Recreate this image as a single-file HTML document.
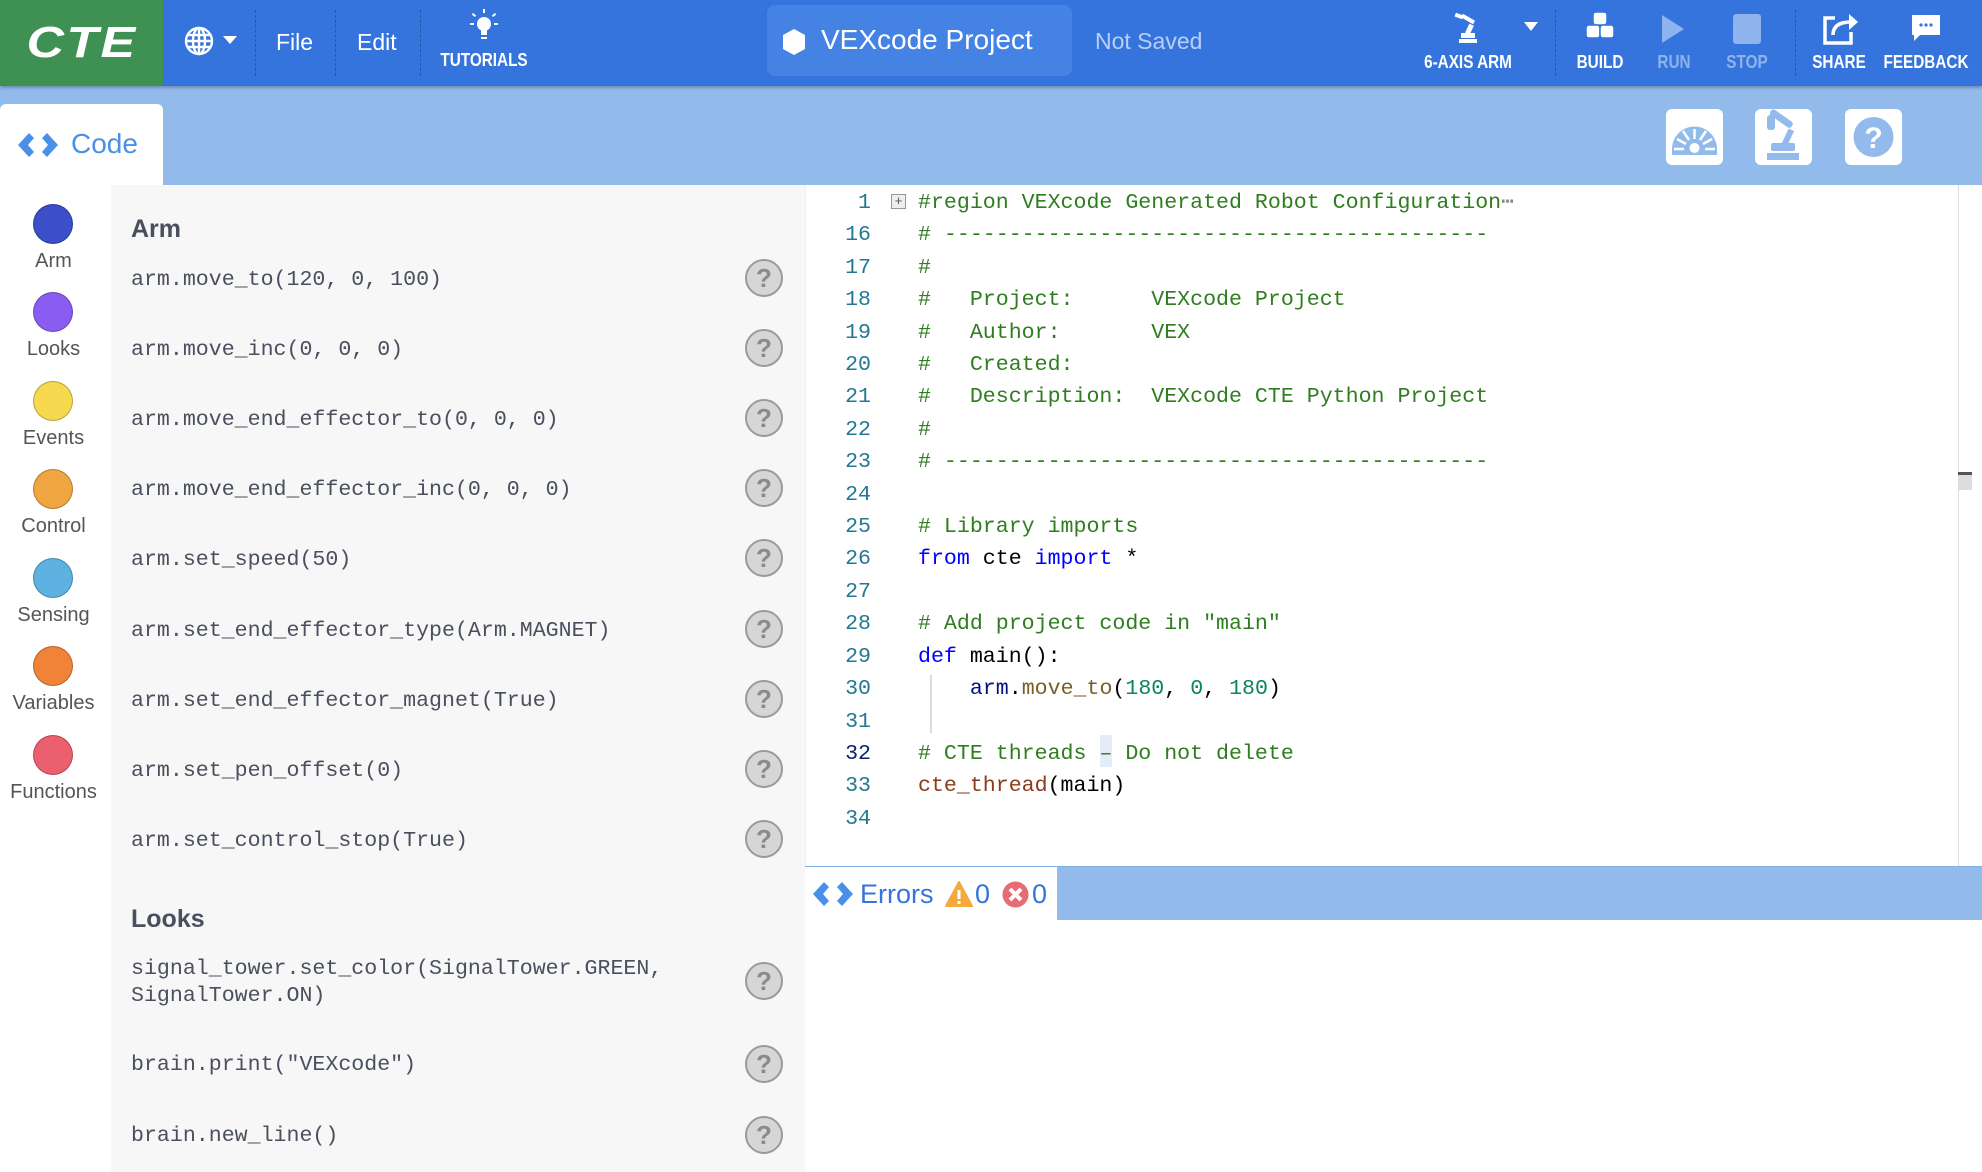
<!DOCTYPE html>
<html><head><meta charset="utf-8"><style>
*{margin:0;padding:0;box-sizing:border-box}
body{width:1982px;height:1172px;overflow:hidden;background:#fff;font-family:"Liberation Sans",sans-serif;position:relative}
.a{position:absolute}
#top{left:0;top:0;width:1982px;height:86px;background:#3574dc;box-shadow:0 2px 3px rgba(0,0,0,.25);z-index:2}
#logo{left:0;top:0;width:163px;height:86px;background:#3e9152;color:#fff;font:italic bold 44px "Liberation Sans",sans-serif;letter-spacing:2px;display:flex;align-items:center;justify-content:center}
#logo span{display:inline-block;transform:scaleX(1.18)}
.sep{top:10px;height:66px;border-left:1px dashed #2457a8}
.menu{color:#fff;font-size:23px;top:29px}
.lbl{color:#fff;font-weight:bold;font-size:18px;top:52px;transform:translateX(-50%) scaleX(.85);white-space:nowrap}
.dim{color:#8fb3ec}
#bar2{left:0;top:86px;width:1982px;height:99px;background:#92bbec}
#codetab{left:0;top:104px;width:163px;height:81px;background:#fff;border-radius:6px 6px 0 0;color:#4a90e8;font-size:28px}
.tb{top:109px;width:57px;height:56px;background:#fff;border-radius:6px}
#cats{left:0;top:185px;width:111px;height:987px;background:#fff}
.cat{left:-2px;width:111px;text-align:center;font-size:20px;color:#555}
.dot{position:absolute;left:35px;width:40px;height:40px;border-radius:50%;border:1px solid rgba(0,0,0,.25)}
#pal{left:111px;top:185px;width:694px;height:987px;background:#f7f7f7}
.h{left:131px;font-weight:bold;font-size:25px;color:#4a4f5e}
.it{left:131px;font:21.6px "Liberation Mono",monospace;color:#4a4f5e;white-space:pre;line-height:27px}
.q{left:745px;width:38px;height:38px;border-radius:50%;background:#d6d6d6;border:2px solid #9a9a9a;color:#8a8a8a;font:bold 26px "Liberation Sans",sans-serif;text-align:center;line-height:34px}
#ed{left:805px;top:185px;width:1177px;height:681px;background:#fff;border-left:1px solid #eee}
.ln{left:805px;width:66px;text-align:right;font:21.6px "Liberation Mono",monospace;color:#237893;line-height:32.4px}
.cd{left:918px;font:21.6px "Liberation Mono",monospace;white-space:pre;line-height:32.4px;color:#000}
.c{color:#2e7d1e}.k{color:#0000ff}.f{color:#795e26}.n{color:#098658}.v{color:#001080}.b{color:#8b3a1a}
</style></head><body>
<div id="top" class="a">
 <div id="logo" class="a"><span>CTE</span></div>
 <svg class="a" style="left:183px;top:25px" width="32" height="32" viewBox="0 0 32 32" fill="none" stroke="#fff" stroke-width="2.4"><circle cx="16" cy="16" r="13"/><ellipse cx="16" cy="16" rx="6" ry="13"/><line x1="16" y1="3" x2="16" y2="29"/><line x1="3" y1="16" x2="29" y2="16"/><line x1="5" y1="10" x2="27" y2="10"/><line x1="5" y1="22" x2="27" y2="22"/></svg>
 <div class="a" style="left:223px;top:36px;border-left:7px solid transparent;border-right:7px solid transparent;border-top:8px solid #fff"></div>
 <div class="sep a" style="left:255px"></div>
 <div class="menu a" style="left:276px">File</div>
 <div class="sep a" style="left:335px"></div>
 <div class="menu a" style="left:357px">Edit</div>
 <div class="sep a" style="left:420px"></div>
 <svg class="a" style="left:469px;top:8px" width="30" height="34" viewBox="0 0 30 34" fill="#fff"><circle cx="15" cy="16" r="7"/><rect x="12" y="22" width="6" height="5"/><rect x="12" y="29" width="6" height="2"/><rect x="14" y="1" width="2" height="4"/><rect x="3" y="6" width="4" height="2" transform="rotate(35 5 7)"/><rect x="23" y="6" width="4" height="2" transform="rotate(-35 25 7)"/><rect x="1" y="15" width="4" height="2"/><rect x="25" y="15" width="4" height="2"/></svg>
 <div class="lbl a" style="left:484px;top:50px">TUTORIALS</div>
 <div class="a" style="left:767px;top:5px;width:305px;height:71px;background:#4483e4;border-radius:8px"></div>
 <svg class="a" style="left:782px;top:28px" width="24" height="28" viewBox="0 0 24 28"><polygon points="12,1 23,7 23,21 12,27 1,21 1,7" fill="#fff"/></svg>
 <div class="a" style="left:821px;top:24px;color:#fff;font-size:28px">VEXcode Project</div>
 <div class="a" style="left:1095px;top:28px;color:#b9cff5;font-size:23px">Not Saved</div>
 <svg class="a" style="left:1453px;top:12px" width="30" height="32" viewBox="0 0 30 32" fill="#fff"><rect x="2" y="2" width="8" height="4" transform="rotate(20 6 4)"/><rect x="8" y="5" width="14" height="4" transform="rotate(30 15 7)"/><rect x="14" y="12" width="5" height="10" transform="rotate(25 16 17)"/><rect x="8" y="21" width="14" height="5"/><rect x="6" y="27" width="18" height="4"/></svg>
 <div class="lbl a" style="left:1468px">6-AXIS ARM</div>
 <div class="a" style="left:1524px;top:22px;border-left:7px solid transparent;border-right:7px solid transparent;border-top:9px solid #fff"></div>
 <div class="sep a" style="left:1555px"></div>
 <svg class="a" style="left:1584px;top:11px" width="32" height="34" viewBox="0 0 32 34" fill="#fff" stroke="#3574dc" stroke-width="1.5"><rect x="9" y="1" width="14" height="13" rx="3"/><rect x="2" y="14" width="14" height="13" rx="3"/><rect x="16" y="14" width="14" height="13" rx="3"/></svg>
 <div class="lbl a" style="left:1600px">BUILD</div>
 <svg class="a" style="left:1660px;top:14px" width="26" height="30" viewBox="0 0 26 30"><polygon points="2,1 24,15 2,29" fill="#8fb3ec"/></svg>
 <div class="lbl a dim" style="left:1674px">RUN</div>
 <div class="a" style="left:1733px;top:14px;width:28px;height:30px;background:#8fb3ec;border-radius:3px"></div>
 <div class="lbl a dim" style="left:1747px">STOP</div>
 <div class="sep a" style="left:1795px"></div>
 <svg class="a" style="left:1821px;top:10px" width="38" height="36" viewBox="0 0 38 36" fill="none" stroke="#fff" stroke-width="3.5"><path d="M14 8H4V33H30V22"/><path d="M12 25C12 15 20 12 30 12" /><polygon points="28,4 37,12 28,20" fill="#fff" stroke="none"/></svg>
 <div class="lbl a" style="left:1839px">SHARE</div>
 <svg class="a" style="left:1910px;top:13px" width="32" height="32" viewBox="0 0 32 32"><path d="M2 2H30V22H10L4 28V22H2Z" fill="#fff"/><circle cx="11" cy="12" r="1.6" fill="#3574dc"/><circle cx="16" cy="12" r="1.6" fill="#3574dc"/><circle cx="21" cy="12" r="1.6" fill="#3574dc"/></svg>
 <div class="lbl a" style="left:1926px">FEEDBACK</div>
</div>
<div id="bar2" class="a"></div>
<div id="codetab" class="a"><svg class="a" style="left:18px;top:27px" width="40" height="28" viewBox="0 0 40 28" fill="#4a90e8"><polygon points="0,14 11,2 16,7 10,14 16,21 11,26"/><polygon points="40,14 29,2 24,7 30,14 24,21 29,26"/></svg><span class="a" style="left:71px;top:24px">Code</span></div>
<div class="tb a" style="left:1666px"><svg width="57" height="56" viewBox="0 0 57 56"><path d="M6 40A22 22 0 0 1 51 40V46H6Z" fill="#92bbec"/><circle cx="28.5" cy="39" r="5" fill="#fff"/><g stroke="#fff" stroke-width="2.5"><line x1="28.5" y1="30" x2="28.5" y2="20"/><line x1="23" y1="31" x2="17" y2="22"/><line x1="34" y1="31" x2="40" y2="22"/><line x1="20" y1="35" x2="11" y2="30"/><line x1="37" y1="35" x2="46" y2="30"/><line x1="8" y1="40" x2="18" y2="40"/><line x1="39" y1="40" x2="49" y2="40"/></g></svg></div>
<div class="tb a" style="left:1755px"><svg width="57" height="56" viewBox="0 0 57 56" fill="#92bbec"><rect x="13" y="6" width="26" height="7" rx="3" transform="rotate(35 26 10)"/><rect x="12" y="6" width="8" height="15" rx="3"/><rect x="30" y="20" width="6" height="16" transform="rotate(25 33 28)"/><rect x="16" y="34" width="24" height="8" rx="2"/><rect x="12" y="44" width="32" height="7"/></svg></div>
<div class="tb a" style="left:1845px"><svg width="57" height="56" viewBox="0 0 57 56"><circle cx="28.5" cy="28" r="20" fill="#92bbec"/><text x="28.5" y="39" text-anchor="middle" font-family="Liberation Sans" font-weight="bold" font-size="30" fill="#fff">?</text></svg></div>

<div id="cats" class="a"></div>
<div class="cat a" style="top:204px"><div class="dot" style="top:0;background:#3a4fc8"></div><div style="padding-top:46px">Arm</div></div>
<div class="cat a" style="top:292px"><div class="dot" style="top:0;background:#8a5cf2"></div><div style="padding-top:46px">Looks</div></div>
<div class="cat a" style="top:381px"><div class="dot" style="top:0;background:#f6d94e"></div><div style="padding-top:46px">Events</div></div>
<div class="cat a" style="top:469px"><div class="dot" style="top:0;background:#f0a640"></div><div style="padding-top:46px">Control</div></div>
<div class="cat a" style="top:558px"><div class="dot" style="top:0;background:#5db2e2"></div><div style="padding-top:46px">Sensing</div></div>
<div class="cat a" style="top:646px"><div class="dot" style="top:0;background:#f08338"></div><div style="padding-top:46px">Variables</div></div>
<div class="cat a" style="top:735px"><div class="dot" style="top:0;background:#ec5f6f"></div><div style="padding-top:46px">Functions</div></div>

<div id="pal" class="a"></div>
<div class="h a" style="top:215px">Arm</div>
<div class="it a" style="top:267px">arm.move_to(120, 0, 100)</div><div class="q a" style="top:259px">?</div>
<div class="it a" style="top:337px">arm.move_inc(0, 0, 0)</div><div class="q a" style="top:329px">?</div>
<div class="it a" style="top:407px">arm.move_end_effector_to(0, 0, 0)</div><div class="q a" style="top:399px">?</div>
<div class="it a" style="top:477px">arm.move_end_effector_inc(0, 0, 0)</div><div class="q a" style="top:469px">?</div>
<div class="it a" style="top:547px">arm.set_speed(50)</div><div class="q a" style="top:539px">?</div>
<div class="it a" style="top:618px">arm.set_end_effector_type(Arm.MAGNET)</div><div class="q a" style="top:610px">?</div>
<div class="it a" style="top:688px">arm.set_end_effector_magnet(True)</div><div class="q a" style="top:680px">?</div>
<div class="it a" style="top:758px">arm.set_pen_offset(0)</div><div class="q a" style="top:750px">?</div>
<div class="it a" style="top:828px">arm.set_control_stop(True)</div><div class="q a" style="top:820px">?</div>
<div class="h a" style="top:905px">Looks</div>
<div class="it a" style="top:956px">signal_tower.set_color(SignalTower.GREEN,
SignalTower.ON)</div><div class="q a" style="top:962px">?</div>
<div class="it a" style="top:1052px">brain.print("VEXcode")</div><div class="q a" style="top:1045px">?</div>
<div class="it a" style="top:1123px">brain.new_line()</div><div class="q a" style="top:1116px">?</div>

<div id="ed" class="a"></div>
<div class="a" style="left:1958px;top:185px;height:681px;border-left:1px solid #ddd"></div>
<div class="a" style="left:1958px;top:472px;height:18px;border-top:3px solid #555;background:#ddd;width:14px"></div>
<div class="ln a" style="top:187px">1<br>16<br>17<br>18<br>19<br>20<br>21<br>22<br>23<br>24<br>25<br>26<br>27<br>28<br>29<br>30<br>31<br><span style="color:#0b216f">32</span><br>33<br>34</div>
<div class="a" style="left:891px;top:194px;width:15px;height:15px;border:1px solid #999;background:#eee;font:13px/12px 'Liberation Sans';text-align:center;color:#555">+</div>
<div class="a" style="left:930px;top:675px;height:58px;border-left:2px solid #ddd"></div>
<div class="a" style="left:1100px;top:735px;width:12px;height:32px;background:#e4ecfa"></div>
<div class="cd a" style="top:187px"><span class="c">#region VEXcode Generated Robot Configuration</span><span style="color:#888">⋯</span>
<span class="c"># ------------------------------------------</span>
<span class="c">#</span>
<span class="c">#   Project:      VEXcode Project</span>
<span class="c">#   Author:       VEX</span>
<span class="c">#   Created:</span>
<span class="c">#   Description:  VEXcode CTE Python Project</span>
<span class="c">#</span>
<span class="c"># ------------------------------------------</span>

<span class="c"># Library imports</span>
<span class="k">from</span> cte <span class="k">import</span> *

<span class="c"># Add project code in "main"</span>
<span class="k">def</span> main():
    <span class="v">arm</span>.<span class="f">move_to</span>(<span class="n">180</span>, <span class="n">0</span>, <span class="n">180</span>)

<span class="c"># CTE threads – Do not delete</span>
<span class="b">cte_thread</span>(main)
</div>
<div class="a" style="left:805px;top:866px;width:1177px;height:54px;background:#92bbec;border-top:1px solid #7fb0ea"></div>
<div class="a" style="left:805px;top:867px;width:252px;height:53px;background:#fff"></div>
<svg class="a" style="left:813px;top:880px" width="40" height="28" viewBox="0 0 40 28" fill="#4a90e8"><polygon points="0,14 11,2 16,7 10,14 16,21 11,26"/><polygon points="40,14 29,2 24,7 30,14 24,21 29,26"/></svg>
<div class="a" style="left:860px;top:879px;font-size:27px;color:#3574dc">Errors</div>
<svg class="a" style="left:945px;top:881px" width="28" height="26" viewBox="0 0 28 26"><path d="M14 1L27 25H1Z" fill="#f3a93c" stroke="#f3a93c" stroke-linejoin="round" stroke-width="2"/><rect x="12.5" y="9" width="3" height="9" fill="#fff"/><rect x="12.5" y="20" width="3" height="3" fill="#fff"/></svg>
<div class="a" style="left:975px;top:879px;font-size:27px;color:#3574dc">0</div>
<svg class="a" style="left:1002px;top:881px" width="27" height="27" viewBox="0 0 27 27"><circle cx="13.5" cy="13.5" r="13" fill="#e56c74"/><path d="M8 8L19 19M19 8L8 19" stroke="#fff" stroke-width="4"/></svg>
<div class="a" style="left:1032px;top:879px;font-size:27px;color:#3574dc">0</div>
</body></html>
